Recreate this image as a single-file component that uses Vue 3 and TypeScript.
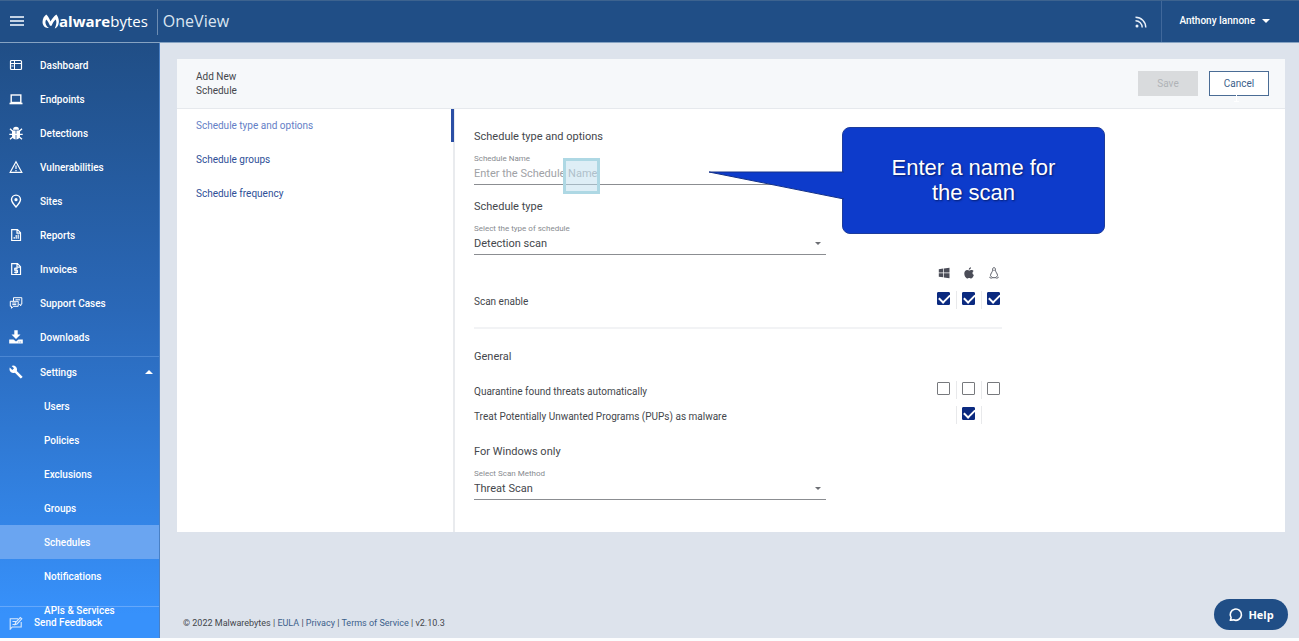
<script setup lang="ts">
import { ref } from 'vue'

interface NavItem {
  label: string
  icon: string
}

const navItems: NavItem[] = [
  { label: 'Dashboard', icon: 'dashboard' },
  { label: 'Endpoints', icon: 'laptop' },
  { label: 'Detections', icon: 'bug' },
  { label: 'Vulnerabilities', icon: 'warning' },
  { label: 'Sites', icon: 'pin' },
  { label: 'Reports', icon: 'report' },
  { label: 'Invoices', icon: 'invoice' },
  { label: 'Support Cases', icon: 'chat' },
  { label: 'Downloads', icon: 'download' },
]

const subItems: string[] = [
  'Users',
  'Policies',
  'Exclusions',
  'Groups',
  'Schedules',
  'Notifications',
  'APIs & Services',
]

const steps: string[] = ['Schedule type and options', 'Schedule groups', 'Schedule frequency']
const platforms: string[] = ['Windows', 'Mac', 'Linux']

const scheduleName = ref('')
const scheduleType = ref('Detection scan')
const scanMethod = ref('Threat Scan')
const scanEnable = ref<boolean[]>([true, true, true])
const quarantine = ref<boolean[]>([false, false, false])
const treatPups = ref(true)
</script>

<template>
  <div class="page">
    <header class="topbar">
      <button class="menu-btn" aria-label="Menu"><span></span><span></span><span></span></button>
      <a class="brand" href="#">
        <svg class="brand-mark" viewBox="0 0 32 28" aria-hidden="true">
          <path d="M8 1 C12 5 14 9 16 14 C19 9 22 5 27 1 C31 6 33 13 31 19 C30 23 27 26 24 27 C27 21 28 15 26 10 C22 13 20 17 18 22 H15 C13 17 11 13 8 10 C5 14 6 22 13 26 C6 27 1 22 1 15 C1 9 4 4 8 1Z" fill="#fff" />
        </svg>
        <span class="brand-name"><b>alware</b>bytes</span>
      </a>
      <span class="product">OneView</span>
      <a class="feed" href="#" aria-label="News feed">
        <svg viewBox="0 0 12 12" fill="none" stroke="#eaf1fa">
          <circle cx="2" cy="10" r="1.5" fill="#eaf1fa" stroke="none" />
          <path d="M.5 4.7a6.6 6.6 0 0 1 6.7 6.8M.5 1.2a10.2 10.2 0 0 1 10.3 10.3" stroke-width="1.4" />
        </svg>
      </a>
      <button class="user">Anthony Iannone<i class="caret"></i></button>
    </header>

    <div class="body">
      <nav class="sidebar">
        <a v-for="item in navItems" :key="item.label" class="nav-item" href="#">
          <svg class="nav-icon" viewBox="0 0 14 14" fill="none" stroke="#fff" stroke-width="1.2">
            <template v-if="item.icon === 'dashboard'">
              <rect x="1.5" y="2.5" width="11" height="9" rx="1" />
              <path d="M2 5.500h10.500M5.500 2.500v9M2.500 8h2" stroke-width="1" />
            </template>
            <template v-else-if="item.icon === 'laptop'">
              <rect x="2.200" y="3" width="9.600" height="7.500" stroke-width="1.400" />
              <path d="M.5 11.500h13" stroke-width="1.600" />
            </template>
            <template v-else-if="item.icon === 'bug'">
              <path d="M4 3.800a3 3 0 0 1 6 0z" fill="#fff" stroke="none" />
              <path d="M3 4.500h3.600v9C4.300 13.300 3 11.500 3 9.500zM7.400 4.500H11v5c0 2-1.300 3.800-3.600 4z" fill="#fff" stroke="none" />
              <path d="M.3 8.400h13.400M1 2.800 4 5.500M13 2.800 10 5.500M1 13.300 4 10.800M13 13.300 10 10.800" stroke-width="1.400" />
            </template>
            <template v-else-if="item.icon === 'warning'">
              <path d="M7 1.800 12.800 12.300H1.200zM7 5.500v3.500M7 10v1.200" />
            </template>
            <template v-else-if="item.icon === 'pin'">
              <path d="M7 13C4.500 10.300 2.500 7.900 2.500 5.600a4.500 4.500 0 0 1 9 0C11.500 7.900 9.500 10.300 7 13z" stroke-width="1.400" />
              <circle cx="7" cy="5.700" r="1.600" fill="#fff" stroke="none" />
            </template>
            <template v-else-if="item.icon === 'report'">
              <path d="M2.700 1.700h5.800l3 3v7.800H2.700zM8 1.700v3.500h3.500" />
              <path d="M5.200 10.800V9M7.200 10.800V7M9.200 10.800V6.500" />
            </template>
            <template v-else-if="item.icon === 'invoice'">
              <path d="M2.700 1.700h5.800l3 3v7.800H2.700zM8 1.700v3.500h3.500" />
              <path d="M8.800 6.300H5.700v2h2.800v2.100H5.200M7.100 5.200v6.500" stroke-width="1.100" />
            </template>
            <template v-else-if="item.icon === 'chat'">
              <path d="M4.500 5V1.700h8.300v6.500h-1v1.600L10.200 8.200M1.300 5.300h7.900v5H4.500l-2 2v-2H1.300zM6.500 3.800h4.500M3.300 7h4M3.300 8.600h4" stroke-width="1" />
            </template>
            <template v-else>
              <path d="M5.300.3h3.400V4.500h2.800L7 9 2.500 4.500h2.800zM.2 9.500h4.300L7 11.500l2.500-2h4.300v4H.2z" fill="#fff" stroke="none" />
              <path d="M9.500 12h.8M11.300 12h.8" stroke="#2c69b9" stroke-width=".8" />
            </template>
          </svg>
          {{ item.label }}
        </a>

        <a class="nav-item settings" href="#">
          <svg class="nav-icon" viewBox="0 0 14 14" aria-hidden="true">
            <path d="M13.300 11.500 7.800 6C8.300 4.500 8 2.900 6.900 1.800A4.200 4.200 0 0 0 2.600.9L5 3.300 3.300 5 .8 2.600a4.100 4.100 0 0 0 .9 4.300c1.100 1.100 2.700 1.400 4.200.9l5.500 5.500c.2.200.6.200.8 0l1.100-1.100c.3-.2.300-.6 0-.7z" fill="#fff" />
          </svg>
          Settings
          <i class="caret up"></i>
        </a>
        <a
          v-for="item in subItems"
          :key="item"
          class="nav-item sub"
          :class="{ active: item === 'Schedules' }"
          href="#"
        >{{ item }}</a>

        <a class="feedback" href="#">
          <svg class="nav-icon" viewBox="0 0 14 14" fill="none" stroke="#d9e9fd" stroke-width="1.100">
            <path d="M9 2.700H1.200v10.500l2-2.200h9V6M3.500 5.500h4M3.500 8.500h2.300M6 8.600l.5-2L11.300 1.500l1.500 1.400L8 8z" />
          </svg>
          Send Feedback
        </a>
      </nav>

      <main class="main">
        <section class="card">
          <div class="card-head">
            <h1>Add New Schedule</h1>
            <button class="btn save" disabled>Save</button>
            <button class="btn cancel">
              Cancel
              <svg class="ibeam" viewBox="0 0 8 14" fill="none" stroke="#fff" aria-hidden="true">
                <path d="M3.500 1v12M1 12.500h5" />
              </svg>
            </button>
          </div>

          <div class="card-body">
            <nav class="steps">
              <a v-for="(step, i) in steps" :key="step" href="#" :class="{ current: i === 0 }">{{ step }}</a>
            </nav>

            <form class="form" @submit.prevent>
              <h2>Schedule type and options</h2>
              <div class="field">
                <label for="schedule-name">Schedule Name</label>
                <input id="schedule-name" v-model="scheduleName" type="text" placeholder="Enter the Schedule Name" />
              </div>

              <h2>Schedule type</h2>
              <div class="field pick">
                <label for="schedule-type">Select the type of schedule</label>
                <select id="schedule-type" v-model="scheduleType">
                  <option>Detection scan</option>
                </select>
                <i class="caret dark"></i>
              </div>

              <div class="row platforms">
                <span></span>
                <svg viewBox="0 0 12 12" fill="#4b4d58" aria-label="Windows">
                  <path d="M.8 2.200 5.200 1.600V5.600H.8zM5.900 1.500 11.500.8v4.800H5.900zM.8 6.300h4.400v4L.8 9.700zM5.900 6.300h5.600v4.900l-5.600-.8z" />
                </svg>
                <svg viewBox="0 0 12 12" fill="#4b4d58" aria-label="Mac">
                  <path d="M8 .3c.1 1.300-1 2.500-2.200 2.500C5.700 1.600 6.800.4 8 .3zM10.600 4c-1.700 1-1.400 3.400.3 4.100-.5 1.400-1.500 3.300-2.700 3.300-.8 0-1.100-.5-2-.5s-1.300.5-2 .5C2.700 11.400 1.300 8.700 1.300 6.600c0-2.300 1.400-3.500 2.800-3.500.9 0 1.500.5 2.200.5.600 0 1.300-.6 2.400-.6.800 0 1.500.4 1.900 1z" />
                </svg>
                <svg viewBox="0 0 12 12" fill="none" stroke="#4b4d58" aria-label="Linux">
                  <path d="M4.500 3.500C4.500 1.500 5 .6 6 .6s1.500.9 1.500 2.900c0 1.500 2 3 2 5L8 10.700H4L2.500 8.500c0-2 2-3.500 2-5zM1.300 10.200 3.500 11.500M10.700 10.200 8.500 11.500M5.300 3.300h1.400" stroke-width=".9" />
                </svg>
              </div>

              <div class="row scan">
                <span>Scan enable</span>
                <div v-for="(p, i) in platforms" :key="p" class="cell">
                  <input v-model="scanEnable[i]" type="checkbox" :aria-label="`Scan enable, ${p}`" />
                </div>
              </div>

              <hr />

              <h2 class="general">General</h2>
              <div class="row quarantine">
                <span>Quarantine found threats automatically</span>
                <div v-for="(p, i) in platforms" :key="p" class="cell">
                  <input v-model="quarantine[i]" type="checkbox" :aria-label="`Quarantine found threats automatically, ${p}`" />
                </div>
              </div>
              <div class="row pups">
                <label for="pups">Treat Potentially Unwanted Programs (PUPs) as malware</label>
                <div class="cell"></div>
                <div class="cell"><input id="pups" v-model="treatPups" type="checkbox" /></div>
                <div class="cell"></div>
              </div>

              <h2 class="windows">For Windows only</h2>
              <div class="field pick">
                <label for="scan-method">Select Scan Method</label>
                <select id="scan-method" v-model="scanMethod">
                  <option>Threat Scan</option>
                </select>
                <i class="caret dark"></i>
              </div>

              <div class="spot"></div>
              <div class="callout">
                <svg class="tail" viewBox="0 0 136 30" aria-hidden="true">
                  <path d="M136 2H1L136 29" fill="#0d3bcb" stroke="#163389" />
                </svg>
                <p>Enter a name for the scan</p>
              </div>
            </form>
          </div>
        </section>

        <footer class="footer">
          © 2022 Malwarebytes | <a href="#">EULA</a> | <a href="#">Privacy</a> |
          <a href="#">Terms of Service</a> | v2.10.3
        </footer>
      </main>
    </div>

    <button class="help">
      <svg viewBox="0 0 16 16" fill="none" stroke="#fff" stroke-width="1.700" aria-hidden="true">
        <path d="M2.500 14.200 3.300 11.400A6 6 0 1 1 6 13.700z" stroke-linejoin="round" />
      </svg>
      Help
    </button>
  </div>
</template>

<style>
body {
  margin: 0;
  background: #fff;
}
</style>

<style scoped>
* {
  box-sizing: border-box;
}

a {
  text-decoration: none;
  color: inherit;
}

button,
input,
select {
  font: inherit;
  margin: 0;
}

.page {
  position: relative;
  display: flex;
  flex-direction: column;
  height: 100vh;
  border-bottom: 3px solid #fcfdfe;
  overflow: hidden;
  font-family: Roboto, "Liberation Sans", sans-serif;
  font-size: 10px;
  color: #44474c;
}

.topbar {
  flex: none;
  display: flex;
  align-items: center;
  height: 43px;
  border-top: 1px solid #3d638f;
  border-bottom: 1px solid #86a3c2;
  background: #204e86;
  color: #fff;
}

.menu-btn {
  display: flex;
  flex-direction: column;
  gap: 2px;
  width: 14px;
  margin-left: 10px;
  padding: 0 0 2px;
  border: 0;
  background: none;
}

.menu-btn span {
  height: 2px;
  background: #c3d2e4;
}

.brand {
  display: flex;
  align-items: center;
  margin-left: 18px;
  padding-right: 9px;
  height: 26px;
  border-right: 1px solid #6d8db3;
}

.brand-mark {
  width: 17px;
  height: 15px;
}

.brand-name {
  padding-bottom: 2px;
  font-family: "Open Sans", "Noto Sans", sans-serif;
  font-size: 15px;
  line-height: 24px;
}

.product {
  margin-left: 5px;
  padding-bottom: 2px;
  font-family: "Open Sans", "Noto Sans", sans-serif;
  font-size: 16px;
  line-height: 24px;
  color: #dbe5f1;
}

.feed {
  margin-left: auto;
  margin-right: 14px;
  width: 12px;
  height: 12px;
}

.feed svg {
  display: block;
}

.user {
  display: flex;
  align-items: center;
  gap: 7px;
  height: 41px;
  padding: 0 29px 2px 17px;
  border: 0;
  border-left: 1px solid #40689b;
  background: none;
  color: #fff;
  font-weight: 500;
}

.caret {
  border: 4px solid transparent;
  border-top-color: #fff;
  border-bottom-width: 0;
}

.caret.up {
  border-top-width: 0;
  border-bottom: 4px solid #fff;
  margin-left: auto;
}

.body {
  flex: 1;
  min-height: 0;
  display: flex;
}

.sidebar {
  position: relative;
  flex: none;
  width: 160px;
  padding-top: 5px;
  overflow: hidden;
  border-right: 1px solid #4a80c4;
  background: linear-gradient(#204e86, #2a68b8 45%, #3791fb 96%);
  color: #fff;
  font-weight: 500;
}

.nav-item {
  display: flex;
  align-items: center;
  height: 34px;
  padding-left: 9px;
}

.nav-icon {
  flex: none;
  width: 14px;
  height: 14px;
  margin-right: 17px;
}

.settings {
  height: 33px;
  margin-top: 2px;
  padding-right: 6px;
  padding-bottom: 2px;
  border-top: 1px solid #4b87d3;
}

.sub {
  position: relative;
  z-index: 1;
  padding-left: 44px;
}

.sub.active {
  background: #6aa5f1;
}

.feedback {
  position: absolute;
  inset: auto 0 0 0;
  display: flex;
  align-items: center;
  height: 32px;
  padding-left: 9px;
  border-top: 1px solid #65a8fb;
}

.feedback .nav-icon {
  margin-right: 11px;
}

.main {
  flex: 1;
  min-width: 0;
  display: flex;
  flex-direction: column;
  padding: 16px 14px 7px 17px;
  background: #dde3ec;
}

.card {
  background: #fff;
}

.card-head {
  display: flex;
  align-items: center;
  gap: 11px;
  height: 50px;
  padding: 0 16px 0 19px;
  border-bottom: 1px solid #e6e9ed;
  background: #f6f8fa;
}

h1 {
  width: 60px;
  margin: 0 auto 0 0;
  font-size: 10px;
  font-weight: 400;
  line-height: 14px;
}

.btn {
  position: relative;
  width: 60px;
  height: 25px;
  padding: 0;
  border: 0;
}

.save {
  background: #d9dbdd;
  color: #b0b3b7;
}

.cancel {
  border: 1px solid #4a6c95;
  background: #fff;
  color: #3c5f8b;
}

.ibeam {
  position: absolute;
  left: 23px;
  top: 17px;
  width: 8px;
  height: 14px;
}

.card-body {
  display: flex;
}

.steps {
  flex: none;
  display: flex;
  flex-direction: column;
  gap: 1px;
  width: 278px;
  border-right: 2px solid #e9ebee;
  color: #2e4f97;
}

.steps a {
  display: flex;
  align-items: center;
  height: 33px;
  padding-left: 19px;
}

.steps .current {
  margin-right: -1px;
  border-right: 3px solid #2b4fa5;
  color: #6480c6;
}

.form {
  position: relative;
  flex: 1;
  padding: 20px 0 32px 19px;
}

h2 {
  margin: 14px 0 8px;
  font-size: 11px;
  font-weight: 400;
  line-height: 16px;
}

h2:first-child {
  margin-top: 0;
}

.field {
  position: relative;
  display: flex;
  flex-direction: column;
  max-width: 352px;
}

.field label {
  font-size: 8px;
  line-height: 12px;
  color: #888b90;
}

.field input,
.field select {
  width: 100%;
  height: 20px;
  padding: 0 0 3px;
  border: 0;
  border-bottom: 1px solid #8b8d91;
  border-radius: 0;
  outline: 0;
  background: none;
  appearance: none;
  font-size: 11px;
  color: #44474c;
}

.field input::placeholder {
  color: #a0a2a6;
}

.pick .caret {
  position: absolute;
  right: 5px;
  bottom: 10px;
  pointer-events: none;
}

.caret.dark {
  border-width: 3px 3px 0;
  border-top-color: #6d6f74;
}

.row {
  display: grid;
  grid-template-columns: 1fr 25px 25px 25px;
  align-items: end;
  max-width: 532px;
  line-height: 14px;
}

.platforms {
  margin-top: 12px;
}

.platforms svg {
  width: 12px;
  height: 12px;
  justify-self: center;
}

.scan {
  margin-top: 12px;
}

.quarantine {
  margin-top: 16px;
}

.pups {
  margin-top: 7px;
}

.cell {
  display: flex;
  align-items: center;
  justify-content: center;
  height: 18px;
  padding-bottom: 3px;
}

.cell + .cell {
  padding-right: 2px;
  border-left: 1px solid #e8e9eb;
}

.cell input {
  position: relative;
  width: 13px;
  height: 13px;
  border: 1px solid #77797d;
  border-radius: 1px;
  background: #fff;
  appearance: none;
}

.cell input:checked {
  border-color: #0b2a80;
  background: #0b2a80;
}

.cell input:checked::after {
  content: "";
  position: absolute;
  left: 1px;
  top: 1px;
  width: 9px;
  height: 5px;
  border: solid #fff;
  border-width: 0 0 2px 2px;
  transform: rotate(-45deg);
}

hr {
  max-width: 528px;
  height: 2px;
  margin: 18px 0 0;
  border: 0;
  background: #f2f3f5;
}

.general {
  margin: 20px 0 0;
}

.windows {
  margin-top: 20px;
}

.spot {
  position: absolute;
  left: 108px;
  top: 49px;
  width: 37px;
  height: 36px;
  border: 3px solid #aed8e4;
  background: rgba(190, 222, 238, 0.5);
}

.callout {
  position: absolute;
  left: 387px;
  top: 18px;
  display: flex;
  align-items: center;
  justify-content: center;
  width: 263px;
  height: 107px;
  padding-bottom: 2px;
  border: 1px solid #1d3c9c;
  border-radius: 8px;
  background: #0d3bcb;
}

.callout p {
  width: 180px;
  margin: 0;
  font-family: "Liberation Sans", Arial, sans-serif;
  font-size: 22px;
  line-height: 25px;
  text-align: center;
  color: #fff;
  text-shadow: 1px 1px 2px #061d6b;
}

.tail {
  position: absolute;
  left: -135px;
  top: 42px;
  width: 136px;
  height: 30px;
}

.footer {
  margin-top: auto;
  padding-left: 6px;
  font-size: 9px;
  line-height: 16px;
}

.footer a {
  color: #3c5f8b;
}

.help {
  position: absolute;
  right: 11px;
  bottom: 8px;
  display: flex;
  align-items: center;
  justify-content: center;
  gap: 5px;
  width: 74px;
  height: 31px;
  padding: 0;
  border: 0;
  border-radius: 16px;
  background: #204e86;
  color: #fff;
  font-family: "Open Sans", "Noto Sans", sans-serif;
  font-size: 11px;
  font-weight: 700;
}

.help svg {
  width: 15px;
  height: 15px;
}
</style>
